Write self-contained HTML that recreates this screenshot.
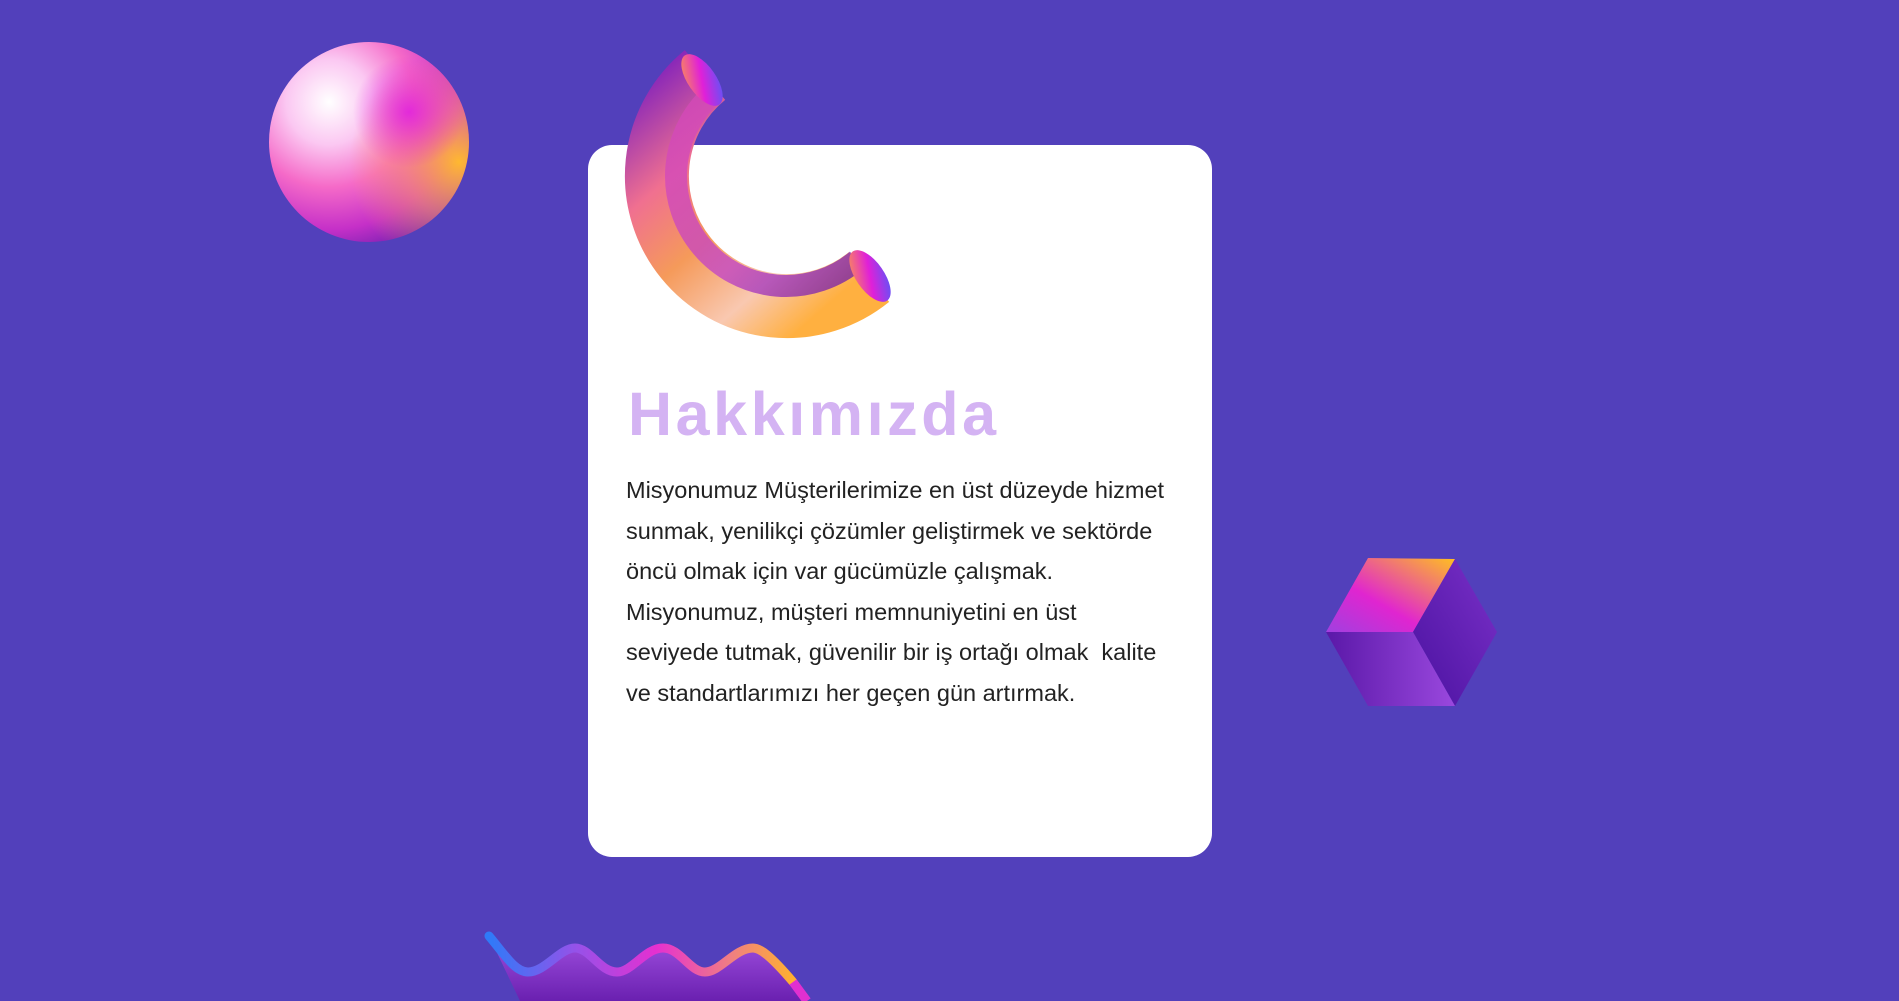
<!DOCTYPE html>
<html><head><meta charset="utf-8"><style>
html,body{margin:0;padding:0}
body{width:1899px;height:1001px;background:#5240bb;position:relative;overflow:hidden;font-family:"Liberation Sans",sans-serif}
.card{position:absolute;left:588px;top:145px;width:624px;height:712px;background:#fff;border-radius:24px}
h1{position:absolute;left:628px;top:378px;margin:0;font-size:61px;line-height:72px;font-weight:bold;color:#d4b3f3;letter-spacing:3.6px}
.p{position:absolute;left:626px;top:470px;font-size:23.5px;line-height:40.6px;color:#222;white-space:nowrap}
svg{position:absolute;left:0;top:0}
</style></head><body>
<div class="card"></div>
<svg width="1899" height="1001" viewBox="0 0 1899 1001">
<defs>
<radialGradient id="sph" cx="0.3" cy="0.3" r="0.85">
<stop offset="0" stop-color="#fff"/>
<stop offset="0.25" stop-color="#fbc8f2"/>
<stop offset="0.5" stop-color="#f56ac8"/>
<stop offset="0.75" stop-color="#c530c8"/>
<stop offset="1" stop-color="#5a1aa8"/>
</radialGradient>
<radialGradient id="sph2" cx="0.95" cy="0.6" r="0.55">
<stop offset="0" stop-color="#ffb830" stop-opacity="1"/>
<stop offset="0.5" stop-color="#ff9a6a" stop-opacity="0.6"/>
<stop offset="1" stop-color="#ff9a6a" stop-opacity="0"/>
</radialGradient>
<radialGradient id="sph3" cx="0.7" cy="0.35" r="0.28">
<stop offset="0" stop-color="#e020e0" stop-opacity="0.9"/>
<stop offset="1" stop-color="#e020e0" stop-opacity="0"/>
</radialGradient>
<linearGradient id="horn" x1="0" y1="0" x2="0.8" y2="1">
<stop offset="0" stop-color="#8a28b8"/>
<stop offset="0.3" stop-color="#f07090"/>
<stop offset="0.55" stop-color="#f59a5a"/>
<stop offset="0.8" stop-color="#f9c8b0"/>
<stop offset="1" stop-color="#ffb040"/>
</linearGradient>
<linearGradient id="hornIn" x1="0" y1="0" x2="1" y2="1">
<stop offset="0" stop-color="#d84ab8"/>
<stop offset="0.6" stop-color="#c040c8"/>
<stop offset="1" stop-color="#6a1aa8"/>
</linearGradient>
<linearGradient id="cap" x1="0" y1="0" x2="1" y2="1">
<stop offset="0" stop-color="#ffa040"/>
<stop offset="0.5" stop-color="#e020d8"/>
<stop offset="1" stop-color="#4060ff"/>
</linearGradient>
<linearGradient id="ctop" x1="0" y1="1" x2="1" y2="0">
<stop offset="0" stop-color="#a040e0"/>
<stop offset="0.4" stop-color="#e025d0"/>
<stop offset="1" stop-color="#ffc020"/>
</linearGradient>
<linearGradient id="cright" x1="1" y1="0" x2="0" y2="1">
<stop offset="0" stop-color="#7a30c8"/>
<stop offset="1" stop-color="#4a12a0"/>
</linearGradient>
<linearGradient id="cbot" x1="0" y1="0" x2="1" y2="0">
<stop offset="0" stop-color="#5a18a8"/>
<stop offset="1" stop-color="#9a48de"/>
</linearGradient>
<linearGradient id="wave" x1="0" y1="0" x2="1" y2="0">
<stop offset="0" stop-color="#2f7af8"/>
<stop offset="0.3" stop-color="#9a50e8"/>
<stop offset="0.55" stop-color="#e530d0"/>
<stop offset="0.8" stop-color="#f08080"/>
<stop offset="1" stop-color="#ffb030"/>
</linearGradient>
<linearGradient id="wfill" x1="0" y1="0" x2="0" y2="1">
<stop offset="0" stop-color="#a050e0"/>
<stop offset="1" stop-color="#6a20b0"/>
</linearGradient>
</defs>
<circle cx="369" cy="142" r="100" fill="url(#sph)"/>
<circle cx="369" cy="142" r="100" fill="url(#sph2)"/>
<circle cx="369" cy="142" r="100" fill="url(#sph3)"/>
<path d="M705 75 A130 130 0 1 0 869 277" fill="none" stroke="url(#horn)" stroke-width="64"/>
<path d="M715 92 A108 108 0 1 0 857 260" fill="none" stroke="url(#hornIn)" stroke-width="22" opacity="0.75"/>
<ellipse cx="702" cy="80" rx="14" ry="30" transform="rotate(-35 702 80)" fill="url(#cap)"/>
<ellipse cx="870" cy="276" rx="14" ry="30" transform="rotate(-35 870 276)" fill="url(#cap)"/>
<polygon points="1368,558 1455,559 1413,632 1326,632" fill="url(#ctop)"/>
<polygon points="1455,559 1497,632 1455,706 1413,632" fill="url(#cright)"/>
<polygon points="1326,632 1413,632 1455,706 1368,706" fill="url(#cbot)"/>
<path d="M489 936 L520 1001 L805 1001 L793 982 C770 955 760 948 753 948 C735 948 720 972 705 972 C690 972 680 948 663 948 C645 948 632 972 617 972 C600 972 590 948 575 948 C560 948 545 972 528 972 C515 972 505 955 489 936Z" fill="url(#wfill)"/>
<path d="M489 936 C505 955 515 972 528 972 C545 972 560 948 575 948 C590 948 600 972 617 972 C632 972 645 948 663 948 C680 948 690 972 705 972 C720 972 735 948 753 948 C760 948 770 955 793 982" fill="none" stroke="url(#wave)" stroke-width="9" stroke-linecap="round"/>
<path d="M793 982 L807 1001" stroke="#e030d0" stroke-width="9"/>
</svg>
<h1>Hakkımızda</h1>
<div class="p">Misyonumuz Müşterilerimize en üst düzeyde hizmet<br>sunmak, yenilikçi çözümler geliştirmek ve sektörde<br>öncü olmak için var gücümüzle çalışmak.<br>Misyonumuz, müşteri memnuniyetini en üst<br>seviyede tutmak, güvenilir bir iş ortağı olmak&nbsp; kalite<br>ve standartlarımızı her geçen gün artırmak.</div>
</body></html>
